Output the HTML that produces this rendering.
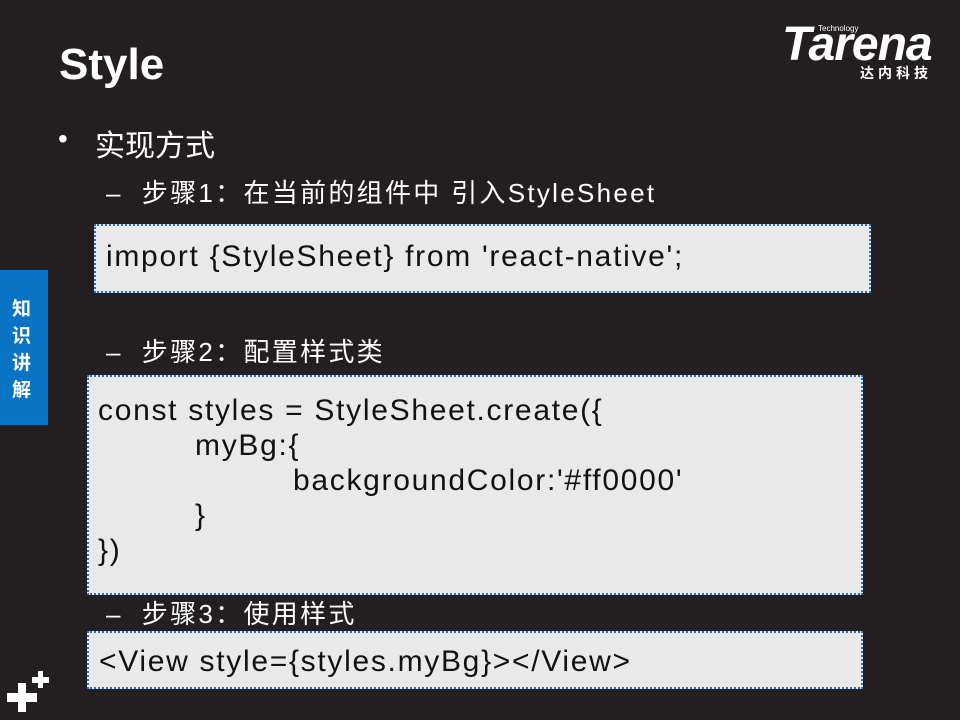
<!DOCTYPE html>
<html><head><meta charset="utf-8"><style>
body{margin:0;width:960px;height:720px;background:#231f20;position:relative;overflow:hidden;font-family:"Liberation Sans","Noto Sans CJK SC",sans-serif;color:#fff}
.a{position:absolute;white-space:nowrap}
.box{position:absolute;background:#e9e9e9;border:2px dotted #2a6fc0;box-sizing:border-box;color:#111;font-size:30px;letter-spacing:1.7px}
</style></head><body>
<div class="a" style="left:59px;top:40px;font-size:44px;font-weight:bold">Style</div>
<div class="a" style="left:782px;top:22px;font-size:48px;font-weight:bold;font-style:italic;letter-spacing:-1px;line-height:46px">Tarena</div>
<div class="a" style="left:818px;top:24px;font-size:8px">Technology</div>
<div class="a" style="left:860px;top:63px;font-size:14px;font-weight:bold;letter-spacing:4px">达内科技</div>
<div class="a" style="left:58px;top:123px;font-size:28px">•</div>
<div class="a" style="left:95px;top:121px;font-size:30px">实现方式</div>
<div class="a" style="left:106px;top:173px;font-size:26px;letter-spacing:2.3px">–&nbsp; 步骤1：在当前的组件中 引入StyleSheet</div>
<div class="box" style="left:94px;top:224px;width:777px;height:69px;padding:14px 0 0 10px">import {StyleSheet} from 'react-native';</div>
<div class="a" style="left:106px;top:332px;font-size:26px;letter-spacing:2.3px">–&nbsp; 步骤2：配置样式类</div>
<div class="box" style="left:87px;top:375px;width:776px;height:220px;padding:16px 0 0 9px;line-height:35px">const styles = StyleSheet.create({<br><span style="padding-left:97px">myBg:{</span><br><span style="padding-left:195px">backgroundColor:'#ff0000'</span><br><span style="padding-left:97px">}</span><br>})</div>
<div class="a" style="left:106px;top:594px;font-size:26px;letter-spacing:2.3px">–&nbsp; 步骤3：使用样式</div>
<div class="box" style="left:87px;top:631px;width:776px;height:58px;padding:12px 0 0 10px">&lt;View style={styles.myBg}&gt;&lt;/View&gt;</div>
<div class="a" style="left:0;top:270px;width:48px;height:155px;background:#0a74c4"></div>
<div class="a" style="left:12px;top:296px;font-size:19px;font-weight:bold;line-height:27px;white-space:normal;width:24px">知识讲解</div>
<div class="a" style="left:7px;top:693px;width:30px;height:9px;background:#fff"></div>
<div class="a" style="left:18px;top:683px;width:8px;height:29px;background:#fff"></div>
<div class="a" style="left:32px;top:677px;width:17px;height:6px;background:#fff"></div>
<div class="a" style="left:38px;top:671px;width:5px;height:17px;background:#fff"></div>
</body></html>
